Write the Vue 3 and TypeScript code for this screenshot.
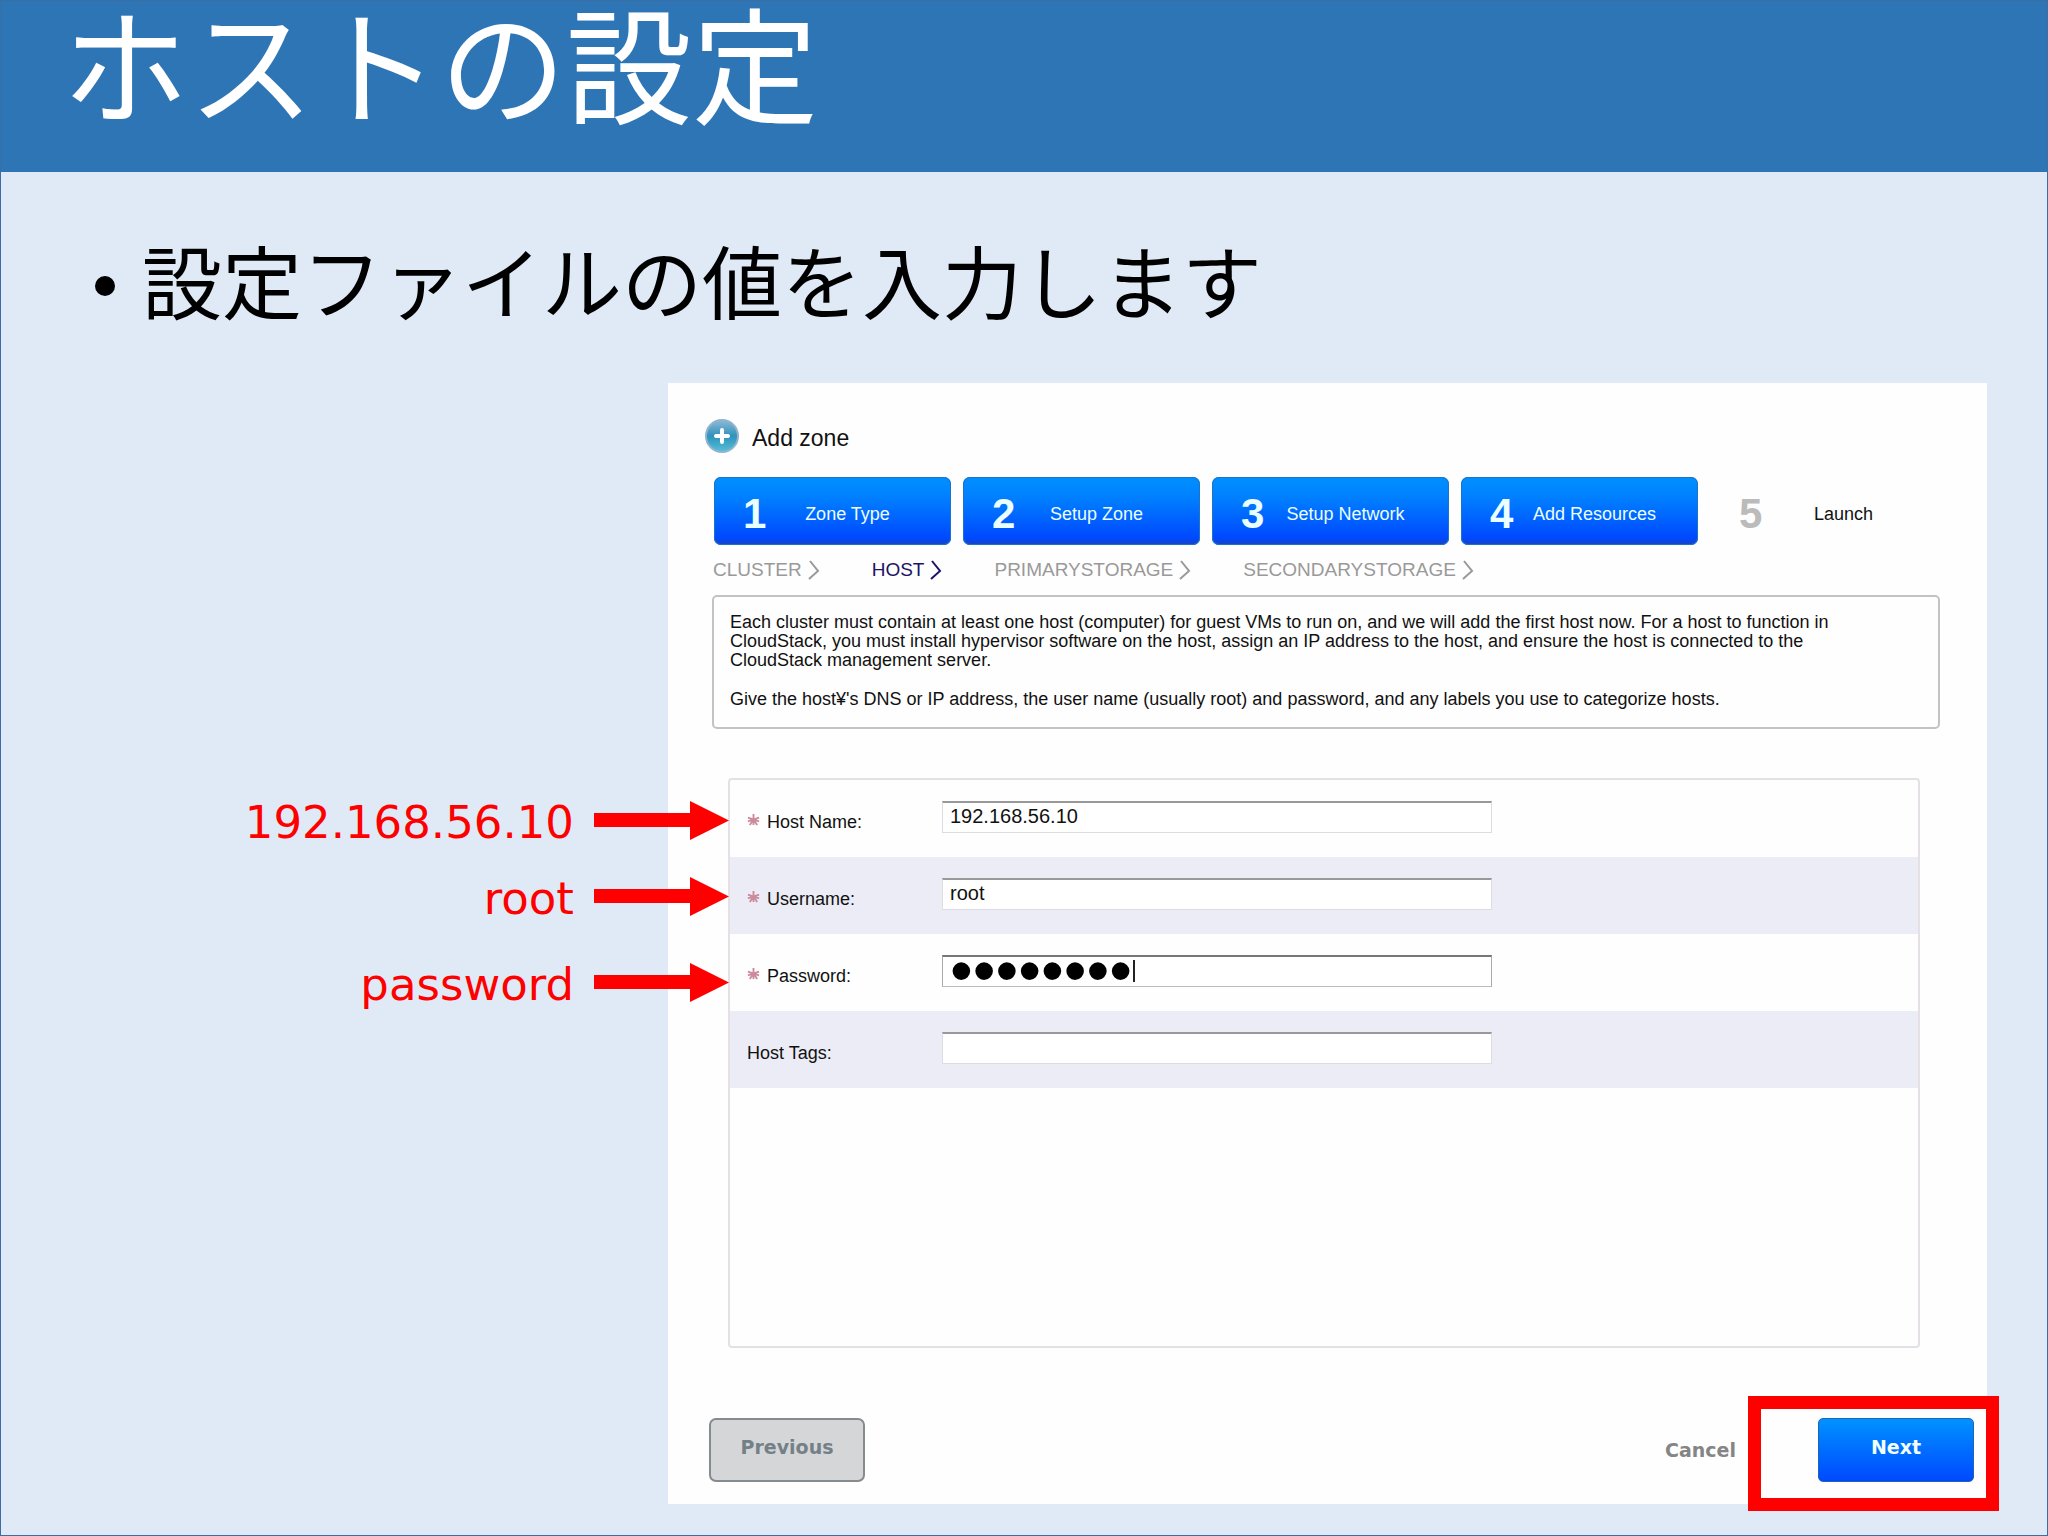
<script setup lang="ts">
import { ref } from 'vue'

interface Field {
  id: string
  label: string
  type: 'text' | 'password'
  required: boolean
}

const steps = ['Zone Type', 'Setup Zone', 'Setup Network', 'Add Resources', 'Launch']
const currentStep = 4

const substeps = ['CLUSTER', 'HOST', 'PRIMARYSTORAGE', 'SECONDARYSTORAGE']
const activeSubstep = 'HOST'

const fields: Field[] = [
  { id: 'hostname', label: 'Host Name:', type: 'text', required: true },
  { id: 'username', label: 'Username:', type: 'text', required: true },
  { id: 'password', label: 'Password:', type: 'password', required: true },
  { id: 'hosttags', label: 'Host Tags:', type: 'text', required: false },
]

const values = ref<Record<string, string>>({
  hostname: '192.168.56.10',
  username: 'root',
  password: 'password',
  hosttags: '',
})

const notes = ['192.168.56.10', 'root', 'password']
</script>

<template>
  <div class="slide">
    <header class="banner">
      <h1>ホストの設定</h1>
    </header>

    <ul class="points">
      <li>設定ファイルの値を入力します</li>
    </ul>

    <main class="content">
      <section class="panel">
        <h2 class="panel-title">
          <svg class="plus" viewBox="0 0 34 34" aria-hidden="true">
            <defs>
              <linearGradient id="plusFill" x1="0" y1="0" x2="0" y2="1">
                <stop offset="0" stop-color="#8fb9d6" />
                <stop offset="0.5" stop-color="#2f93bb" />
                <stop offset="1" stop-color="#58bfd9" />
              </linearGradient>
            </defs>
            <circle cx="17" cy="17" r="16" fill="url(#plusFill)" stroke="#8fb4cf" stroke-width="2" />
            <path d="M17 11v12M11 17h12" stroke="#fff" stroke-width="4" stroke-linecap="round" />
          </svg>
          <span>Add zone</span>
        </h2>

        <ol class="steps">
          <li v-for="(step, i) in steps" :key="step" :class="['step', { done: i < currentStep }]">
            <span class="step-number">{{ i + 1 }}</span>
            <span class="step-label">{{ step }}</span>
          </li>
        </ol>

        <ul class="substeps">
          <li v-for="name in substeps" :key="name" :class="{ active: name === activeSubstep }">
            {{ name }}
            <svg viewBox="0 0 12 20" aria-hidden="true">
              <path d="M2 1l8 10l-9 8" fill="none" stroke="currentColor" stroke-width="2" />
            </svg>
          </li>
        </ul>

        <div class="info">
          <p>
            Each cluster must contain at least one host (computer) for guest VMs to run on, and we will add the first host now. For a host to function in<br />
            CloudStack, you must install hypervisor software on the host, assign an IP address to the host, and ensure the host is connected to the<br />
            CloudStack management server.
          </p>
          <p>Give the host¥'s DNS or IP address, the user name (usually root) and password, and any labels you use to categorize hosts.</p>
        </div>

        <form class="form" @submit.prevent>
          <div v-for="field in fields" :key="field.id" class="row">
            <label :for="field.id">
              <svg v-if="field.required" class="star" viewBox="0 0 14 14" aria-hidden="true">
                <path d="M7 1v12M1 5l12 4M1 9l12-4M3 13l4-6l4 6" stroke="#cc8b9b" stroke-width="2" fill="none" />
              </svg>
              {{ field.label }}
            </label>
            <div class="control">
              <input :id="field.id" v-model="values[field.id]" :type="field.type" autocomplete="off" />
              <span v-if="field.type === 'password'" class="caret"></span>
            </div>
          </div>
        </form>

        <footer class="actions">
          <button type="button" class="previous">Previous</button>
          <button type="button" class="cancel">Cancel</button>
          <div class="highlight">
            <button type="button" class="next">Next</button>
          </div>
        </footer>
      </section>

      <aside class="notes">
        <div v-for="note in notes" :key="note" class="note">
          <span>{{ note }}</span>
          <svg viewBox="0 0 135 39" aria-hidden="true">
            <path d="M0 12h96V0l39 19.5L96 39V26H0z" fill="#f00" />
          </svg>
        </div>
      </aside>
    </main>
  </div>
</template>

<style>
body {
  margin: 0;
}
</style>

<style scoped>
.slide {
  box-sizing: border-box;
  min-height: 100vh;
  border: 1px solid #3a6ea5;
  background: #dfeaf6;
  font-family: "Liberation Sans", "Noto Sans CJK JP", sans-serif;
  color: #111;
}

.banner {
  box-sizing: border-box;
  height: 171px;
  padding-left: 61px;
  background: #2e75b6;
}

h1 {
  margin: 0;
  font: 400 126px/142px "Liberation Sans", "Noto Sans CJK JP", sans-serif;
  color: #fff;
}

.points {
  margin: 0;
  padding: 66px 0 0 94px;
  list-style: none;
  font: 400 80px/80px "Noto Sans CJK JP", sans-serif;
  color: #000;
}

.points li {
  display: flex;
  align-items: center;
  gap: 27px;
}

.points li::before {
  content: "";
  width: 20px;
  height: 20px;
  margin-top: 16px;
  border-radius: 50%;
  background: #000;
}

.content {
  display: grid;
  grid-template-columns: 667fr 64fr 1255fr;
  padding: 65px 60px 31px 0;
}

.panel {
  grid-area: 1 / 2 / 2 / 4;
  padding: 35px 13px 22px 41px;
  background: #fefefe;
}

.panel-title {
  display: flex;
  align-items: center;
  gap: 13px;
  margin: 0 0 23px -4px;
  font: 400 23px/32px "Liberation Sans", sans-serif;
}

.panel-title span {
  padding-top: 4px;
}

.plus {
  width: 34px;
  height: 34px;
}

.steps {
  display: grid;
  grid-template-columns: repeat(5, 1fr);
  gap: 12px;
  margin: 0 27px 0 5px;
  padding: 0;
  list-style: none;
}

.step {
  display: flex;
  align-items: center;
  box-sizing: border-box;
  height: 68px;
  padding: 6px 25px 0 29px;
  border-radius: 7px;
}

.step.done {
  background: linear-gradient(#0090ff, #0080ff 30%, #0048ff 90%, #1844c0);
  box-shadow: inset 0 0 0 1px #1c74c8;
  color: #eaffff;
}

.step-number {
  width: 26px;
  font: 700 42px/48px "Liberation Sans", sans-serif;
  color: #bbb;
}

.step.done .step-number {
  color: #eaffff;
}

.step-label {
  flex: 1;
  font-size: 18px;
  text-align: center;
  white-space: nowrap;
}

.substeps {
  display: flex;
  gap: 52px;
  margin: 14px 0 14px 4px;
  padding: 0;
  list-style: none;
  font-size: 19px;
  line-height: 22px;
  color: #999;
}

.substeps li {
  display: flex;
  align-items: center;
  gap: 6px;
}

.substeps .active {
  color: #1c1464;
}

.substeps svg {
  width: 12px;
  height: 20px;
}

.info {
  box-sizing: border-box;
  height: 134px;
  margin: 0 34px 49px 3px;
  padding: 16px;
  border: 2px solid #c4c2c6;
  border-radius: 5px;
  font-size: 18px;
  line-height: 19px;
  white-space: nowrap;
}

.info p {
  margin: 0 0 20px;
}

.form {
  box-sizing: border-box;
  height: 570px;
  margin: 0 54px 0 19px;
  border: 2px solid #e4e0e6;
  border-radius: 4px;
}

.row {
  display: flex;
  align-items: center;
  height: 77px;
}

.row:nth-child(even) {
  background: #ebecf5;
}

label {
  display: flex;
  align-items: center;
  gap: 7px;
  width: 195px;
  margin-left: 17px;
  padding-top: 8px;
  font-size: 18px;
}

.star {
  width: 13px;
  height: 13px;
  margin-bottom: 7px;
}

.control {
  position: relative;
  flex: 0 1 550px;
  margin-bottom: 3px;
}

input {
  display: block;
  box-sizing: border-box;
  width: 100%;
  height: 32px;
  padding: 0 7px 2px;
  border: 1px solid #dcdce2;
  border-top: 2px solid #999;
  outline: none;
  background: #fff;
  font: 400 20px/28px "Liberation Sans", sans-serif;
  color: #111;
}

input[type="password"] {
  border-color: #777 #aaa #bbb;
  font-size: 65px;
  color: #000;
}

.caret {
  position: absolute;
  top: 5px;
  left: 191px;
  width: 2px;
  height: 22px;
  background: #222;
}

.actions {
  display: flex;
  align-items: flex-start;
  margin-top: 70px;
}

button {
  box-sizing: border-box;
  height: 64px;
  padding: 0 0 6px;
  font: 700 19px/24px "DejaVu Sans", sans-serif;
}

.previous {
  width: 156px;
  border: 2px solid #858b8e;
  border-radius: 7px;
  background: #d5d6d8;
  color: #748087;
}

.cancel {
  margin-left: auto;
  padding: 0;
  border: 0;
  background: none;
  color: #858585;
}

.highlight {
  position: relative;
  margin-left: 82px;
}

.highlight::after {
  content: "";
  position: absolute;
  inset: -22px -25px -29px -70px;
  border: 13px solid #f00;
  pointer-events: none;
}

.next {
  display: block;
  width: 156px;
  border: 1px solid #1c66b8;
  border-radius: 5px;
  background: linear-gradient(#0092ff, #0048ff);
  color: #f2ffff;
}

.notes {
  grid-area: 1 / 1 / 2 / 3;
  z-index: 1;
  display: flex;
  flex-direction: column;
  gap: 24px;
  padding-top: 411px;
  pointer-events: none;
}

.note {
  display: flex;
  justify-content: flex-end;
  align-items: center;
  gap: 20px;
  height: 52px;
  padding-right: 3px;
  font: 400 45px/52px "DejaVu Sans", sans-serif;
  color: #f00;
}

.note:last-child {
  margin-top: 10px;
}

.note span {
  padding-top: 6px;
}

.note svg {
  width: 135px;
  height: 39px;
}
</style>
